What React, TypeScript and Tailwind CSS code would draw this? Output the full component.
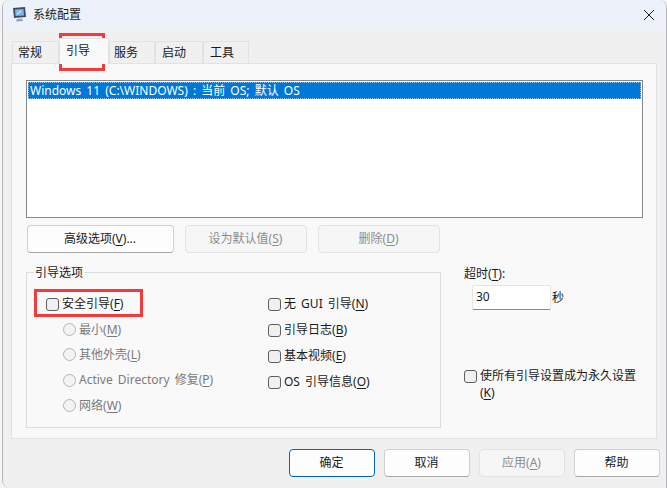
const font = { fontFamily: '"Noto Sans", "Noto Sans CJK SC", sans-serif' };

function Key({ k }: { k: string }) {
  return (
    <>
      (<span className="underline underline-offset-2">{k}</span>)
    </>
  );
}

function Check({ label, k }: { label: string; k: string }) {
  return (
    <div className="flex items-center h-[26px] gap-[3px] text-[#1a1a1a]">
      <span className="w-[13px] h-[13px] rounded-[3px] border border-[#5f5f5f] bg-[#f0f0f0] shrink-0" />
      <span>
        {label}
        <Key k={k} />
      </span>
    </div>
  );
}

function Radio({ label, k }: { label: string; k: string }) {
  return (
    <div className="flex items-center h-[25.3px] gap-[3px] text-[#7a7a7a]">
      <span className="w-[13px] h-[13px] rounded-full border border-[#b4b4b4] bg-[#f3f3f3] shrink-0" />
      <span>
        {label}
        <Key k={k} />
      </span>
    </div>
  );
}

function Btn({ children, w, off, primary }: { children: React.ReactNode; w: string; off?: boolean; primary?: boolean }) {
  const tone = off
    ? "border-[#e3e3e3] bg-[#f6f6f6] text-[#8c8c8c]"
    : primary
      ? "border-[#0067c0] border-[1.5px] bg-[#fdfdfd] text-[#1a1a1a]"
      : "border-[#d0d0d0] border-b-[#a8a8a8] bg-[#fdfdfd] text-[#1a1a1a]";
  return <div className={`${w} h-[28px] rounded-[4px] border flex items-center justify-center pr-[1px] ${tone}`}>{children}</div>;
}

function Tab({ label, w, active }: { label: string; w: string; active?: boolean }) {
  return active ? (
    <div className={`${w} h-[26px] -mb-px bg-[#f9f9f9] border border-b-0 border-[#e2e2e2] flex items-center pb-[1px] relative z-10`}>
      {label}
    </div>
  ) : (
    <div className={`${w} h-[22px] bg-[#f0f0f0] border border-b-0 border-[#e2e2e2] flex items-center`}>{label}</div>
  );
}

export default function App() {
  return (
    <div className="relative w-[667px] h-[488px] overflow-hidden bg-[#f4f4f6] text-[12px] text-[#1a1a1a] [word-spacing:2px]" style={font}>
      <div className="ml-[2px] h-full border-l border-r border-[#b5b6bc] rounded-tl-[8px] rounded-tr-[8px] rounded-bl-[8px] overflow-hidden flex flex-col">
        <div className="h-[30px] bg-[#edf2fa] flex items-center shrink-0">
          <svg width="18" height="18" viewBox="0 0 18 18" className="ml-[8px]">
            <path d="M2 2 L14 1 L15 11 L3 12 Z" fill="#3a4a6b" />
            <path d="M4 3.5 L12.5 3 L13 9.5 L4.5 10 Z" fill="#7fb5e8" />
            <path d="M6 8 L10 5" stroke="#ffffff" strokeWidth="1" />
            <path d="M6 13 L11 12.5 L12 15 L5 15.5 Z" fill="#9a9ea8" />
          </svg>
          <span className="ml-[4px] text-[#1a1a1a]">系统配置</span>
          <svg width="12" height="12" viewBox="0 0 12 12" className="ml-auto mr-[11px]">
            <path d="M1 1 L11 11 M11 1 L1 11" stroke="#1a1a1a" strokeWidth="1" />
          </svg>
        </div>

        <div className="flex-1 bg-[#f0f0f0] pl-[8px] pr-[9px] flex flex-col">
          <div className="flex items-end h-[33px] pl-px shrink-0">
            <Tab label="常规" w="w-[47px] pl-[5px]" />
            <Tab label="引导" w="w-[50px] pl-[6px]" active />
            <Tab label="服务" w="w-[46px] pl-[4px]" />
            <Tab label="启动" w="w-[48px] pl-[6px]" />
            <Tab label="工具" w="w-[46px] pl-[6px]" />
          </div>

          <div className="h-[376px] bg-[#f9f9f9] border border-[#e2e2e2] pt-[16px] pl-[14px] pr-[13px] shrink-0">
            <div className="h-[138px] bg-white border border-[#828790] p-px">
              <div className="h-[17px] bg-[#0078d7] text-white flex items-center pl-[2px] outline-1 -outline-offset-1 outline-dotted outline-[#8fc4ee]">
                Windows 11 (C:\WINDOWS) : 当前 OS; 默认 OS
              </div>
            </div>

            <div className="flex gap-[11px] mt-[7px] pl-px">
              <Btn w="w-[147px]">
                高级选项
                <Key k="V" />
                ...
              </Btn>
              <Btn w="w-[122px]" off>
                设为默认值
                <Key k="S" />
              </Btn>
              <Btn w="w-[122px]" off>
                删除
                <Key k="D" />
              </Btn>
            </div>

            <div className="flex mt-[19px]">
              <div className="relative w-[415px] h-[156px] border border-[#dcdcdc] pt-[18px] pl-[12px] flex">
                <span className="absolute -top-[9px] left-[7px] bg-[#f9f9f9] px-[1px]">引导选项</span>
                <div className="w-[222px]">
                  <div className="pl-[7px]">
                    <Check label="安全引导" k="F" />
                  </div>
                  <div className="pl-[24px]">
                    <Radio label="最小" k="M" />
                    <Radio label="其他外壳" k="L" />
                    <Radio label="Active Directory 修复" k="P" />
                    <Radio label="网络" k="W" />
                  </div>
                </div>
                <div className="pl-[7px]">
                  <Check label="无 GUI 引导" k="N" />
                  <Check label="引导日志" k="B" />
                  <Check label="基本视频" k="E" />
                  <Check label="OS 引导信息" k="O" />
                </div>
              </div>

              <div className="ml-[23px] flex-1">
                <div className="-mt-[7px] h-[17px] flex items-center">
                  超时
                  <Key k="T" />:
                </div>
                <div className="flex items-center mt-[3px] ml-[8px]">
                  <div className="w-[79px] h-[25px] bg-white border border-[#e5e5e5] border-b-[#8a8a8a] rounded-[2px] flex items-center pl-[3px] pb-[2px]">30</div>
                  <span className="ml-px">秒</span>
                </div>
                <div className="flex gap-[3px] mt-[57px] leading-[17px]">
                  <span className="w-[13px] h-[13px] mt-[3px] rounded-[3px] border border-[#5f5f5f] bg-[#f0f0f0] shrink-0" />
                  <span>
                    使所有引导设置成为永久设置
                    <br />
                    <Key k="K" />
                  </span>
                </div>
              </div>
            </div>
          </div>

          <div className="flex justify-end gap-[9px] mt-[10px] mr-[-3px]">
            <Btn w="w-[86px]" primary>
              确定
            </Btn>
            <Btn w="w-[86px]">取消</Btn>
            <Btn w="w-[86px]" off>
              应用
              <Key k="A" />
            </Btn>
            <Btn w="w-[86px]">帮助</Btn>
          </div>
        </div>
      </div>

      <div className="absolute left-[59px] top-[33px] w-[46px] h-[38px] border-[3px] border-[#f43b3b]" />
      <div className="absolute left-[34px] top-[289px] w-[109px] h-[28px] border-[3px] border-[#f43b3b]" />
    </div>
  );
}
